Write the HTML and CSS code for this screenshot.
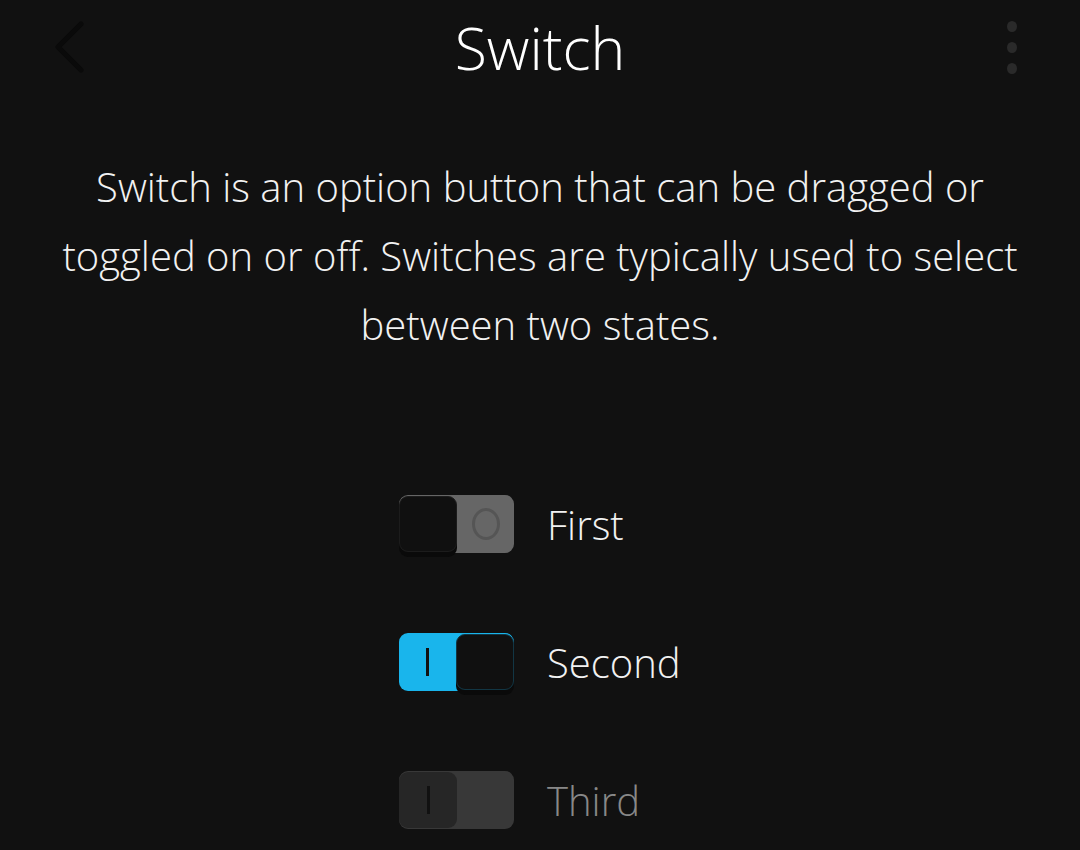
FILE: index.html
```html
<!DOCTYPE html>
<html lang="en">
<head>
  <meta charset="UTF-8">
  <meta name="viewport" content="width=device-width, initial-scale=1.0">
  <title>Switch</title>
  <link rel="stylesheet" href="styles.css">
</head>
<body>
  <header class="topbar">
    <button class="back-button" aria-label="Back">
      <svg width="40" height="60" viewBox="0 0 40 60">
        <path d="M26 4 L3 27 L26 50" fill="none" stroke="#0a0a0a" stroke-width="5" stroke-linecap="round" stroke-linejoin="round"/>
      </svg>
    </button>
    <h1 class="page-title">Switch</h1>
    <button class="menu-button" aria-label="More">
      <span class="dot"></span>
      <span class="dot"></span>
      <span class="dot"></span>
    </button>
  </header>

  <main>
    <p class="intro">Switch is an option button that can be dragged or toggled on or off. Switches are typically used to select between two states.</p>

    <ul class="switch-list">
      <li class="switch-row">
        <span class="switch">
          <span class="switch-thumb"></span>
          <span class="switch-mark mark-off"></span>
        </span>
        <span class="switch-label">First</span>
      </li>
      <li class="switch-row">
        <span class="switch switch-on">
          <span class="switch-mark mark-on"></span>
          <span class="switch-thumb"></span>
        </span>
        <span class="switch-label">Second</span>
      </li>
      <li class="switch-row disabled">
        <span class="switch">
          <span class="switch-thumb"><span class="switch-mark mark-on"></span></span>
        </span>
        <span class="switch-label">Third</span>
      </li>
    </ul>
  </main>
</body>
</html>
```

FILE: styles.css
```css
body {
  margin: 0;
  background: #111111;
  color: #f0f0f0;
  font-family: 'Open Sans', 'Noto Sans', sans-serif;
  font-weight: 300;
  height: 850px;
  overflow: hidden;
}
.topbar {
  display: grid;
  grid-template-columns: 120px 1fr 120px;
  align-items: start;
  height: 100px;
}
.back-button,
.menu-button {
  background: none;
  border: 0;
  padding: 0;
  cursor: pointer;
}
.back-button {
  justify-self: start;
  margin: 20px 0 0 55px;
  width: 40px;
  height: 60px;
}
.page-title {
  margin: 0;
  padding-top: 11px;
  text-align: center;
  font-size: 59px;
  font-weight: 300;
  line-height: 72px;
  color: #ffffff;
}
.menu-button {
  justify-self: end;
  margin: 21px 63px 0 0;
  display: flex;
  flex-direction: column;
  gap: 10px;
}
.dot {
  width: 10px;
  height: 11px;
  border-radius: 50%;
  background: #2a2a2a;
}
.intro {
  margin: 52px 30px 0;
  text-align: center;
  font-size: 40px;
  line-height: 69px;
  color: #f2f2f2;
}
.switch-list {
  list-style: none;
  margin: 136px auto 0;
  padding: 0;
  width: 282px;
  display: flex;
  flex-direction: column;
  gap: 80px;
}
.switch-row {
  display: flex;
  align-items: center;
  gap: 33px;
  height: 58px;
}
.switch {
  display: flex;
  align-items: center;
  width: 115px;
  height: 58px;
  border-radius: 9px;
  background: #666666;
  flex-shrink: 0;
}
.switch-thumb {
  display: flex;
  align-items: center;
  justify-content: center;
  box-sizing: border-box;
  width: 58px;
  height: 56px;
  margin-bottom: 1px;
  border-radius: 9px;
  background: #101010;
  border: 1px solid #1c1c1c;
  box-shadow: 0 5px 0 #0a0a0a;
}
.switch-mark {
  display: flex;
  justify-content: center;
  width: 57px;
}
.mark-off::before {
  content: "";
  width: 22px;
  height: 26px;
  border: 3px solid #555555;
  border-radius: 50%;
}
.mark-on::before {
  content: "";
  width: 3px;
  height: 28px;
  background: #111111;
}
.switch-on {
  background: #19b5ec;
}
.switch-on .switch-thumb {
  border-color: #123644;
}
.switch-label {
  font-size: 40px;
  color: #f2f2f2;
}
.disabled .switch {
  background: #383838;
}
.disabled .switch-thumb {
  background: #262626;
  border: 0;
  box-shadow: none;
}
.disabled .switch-label {
  color: #888888;
}
```
